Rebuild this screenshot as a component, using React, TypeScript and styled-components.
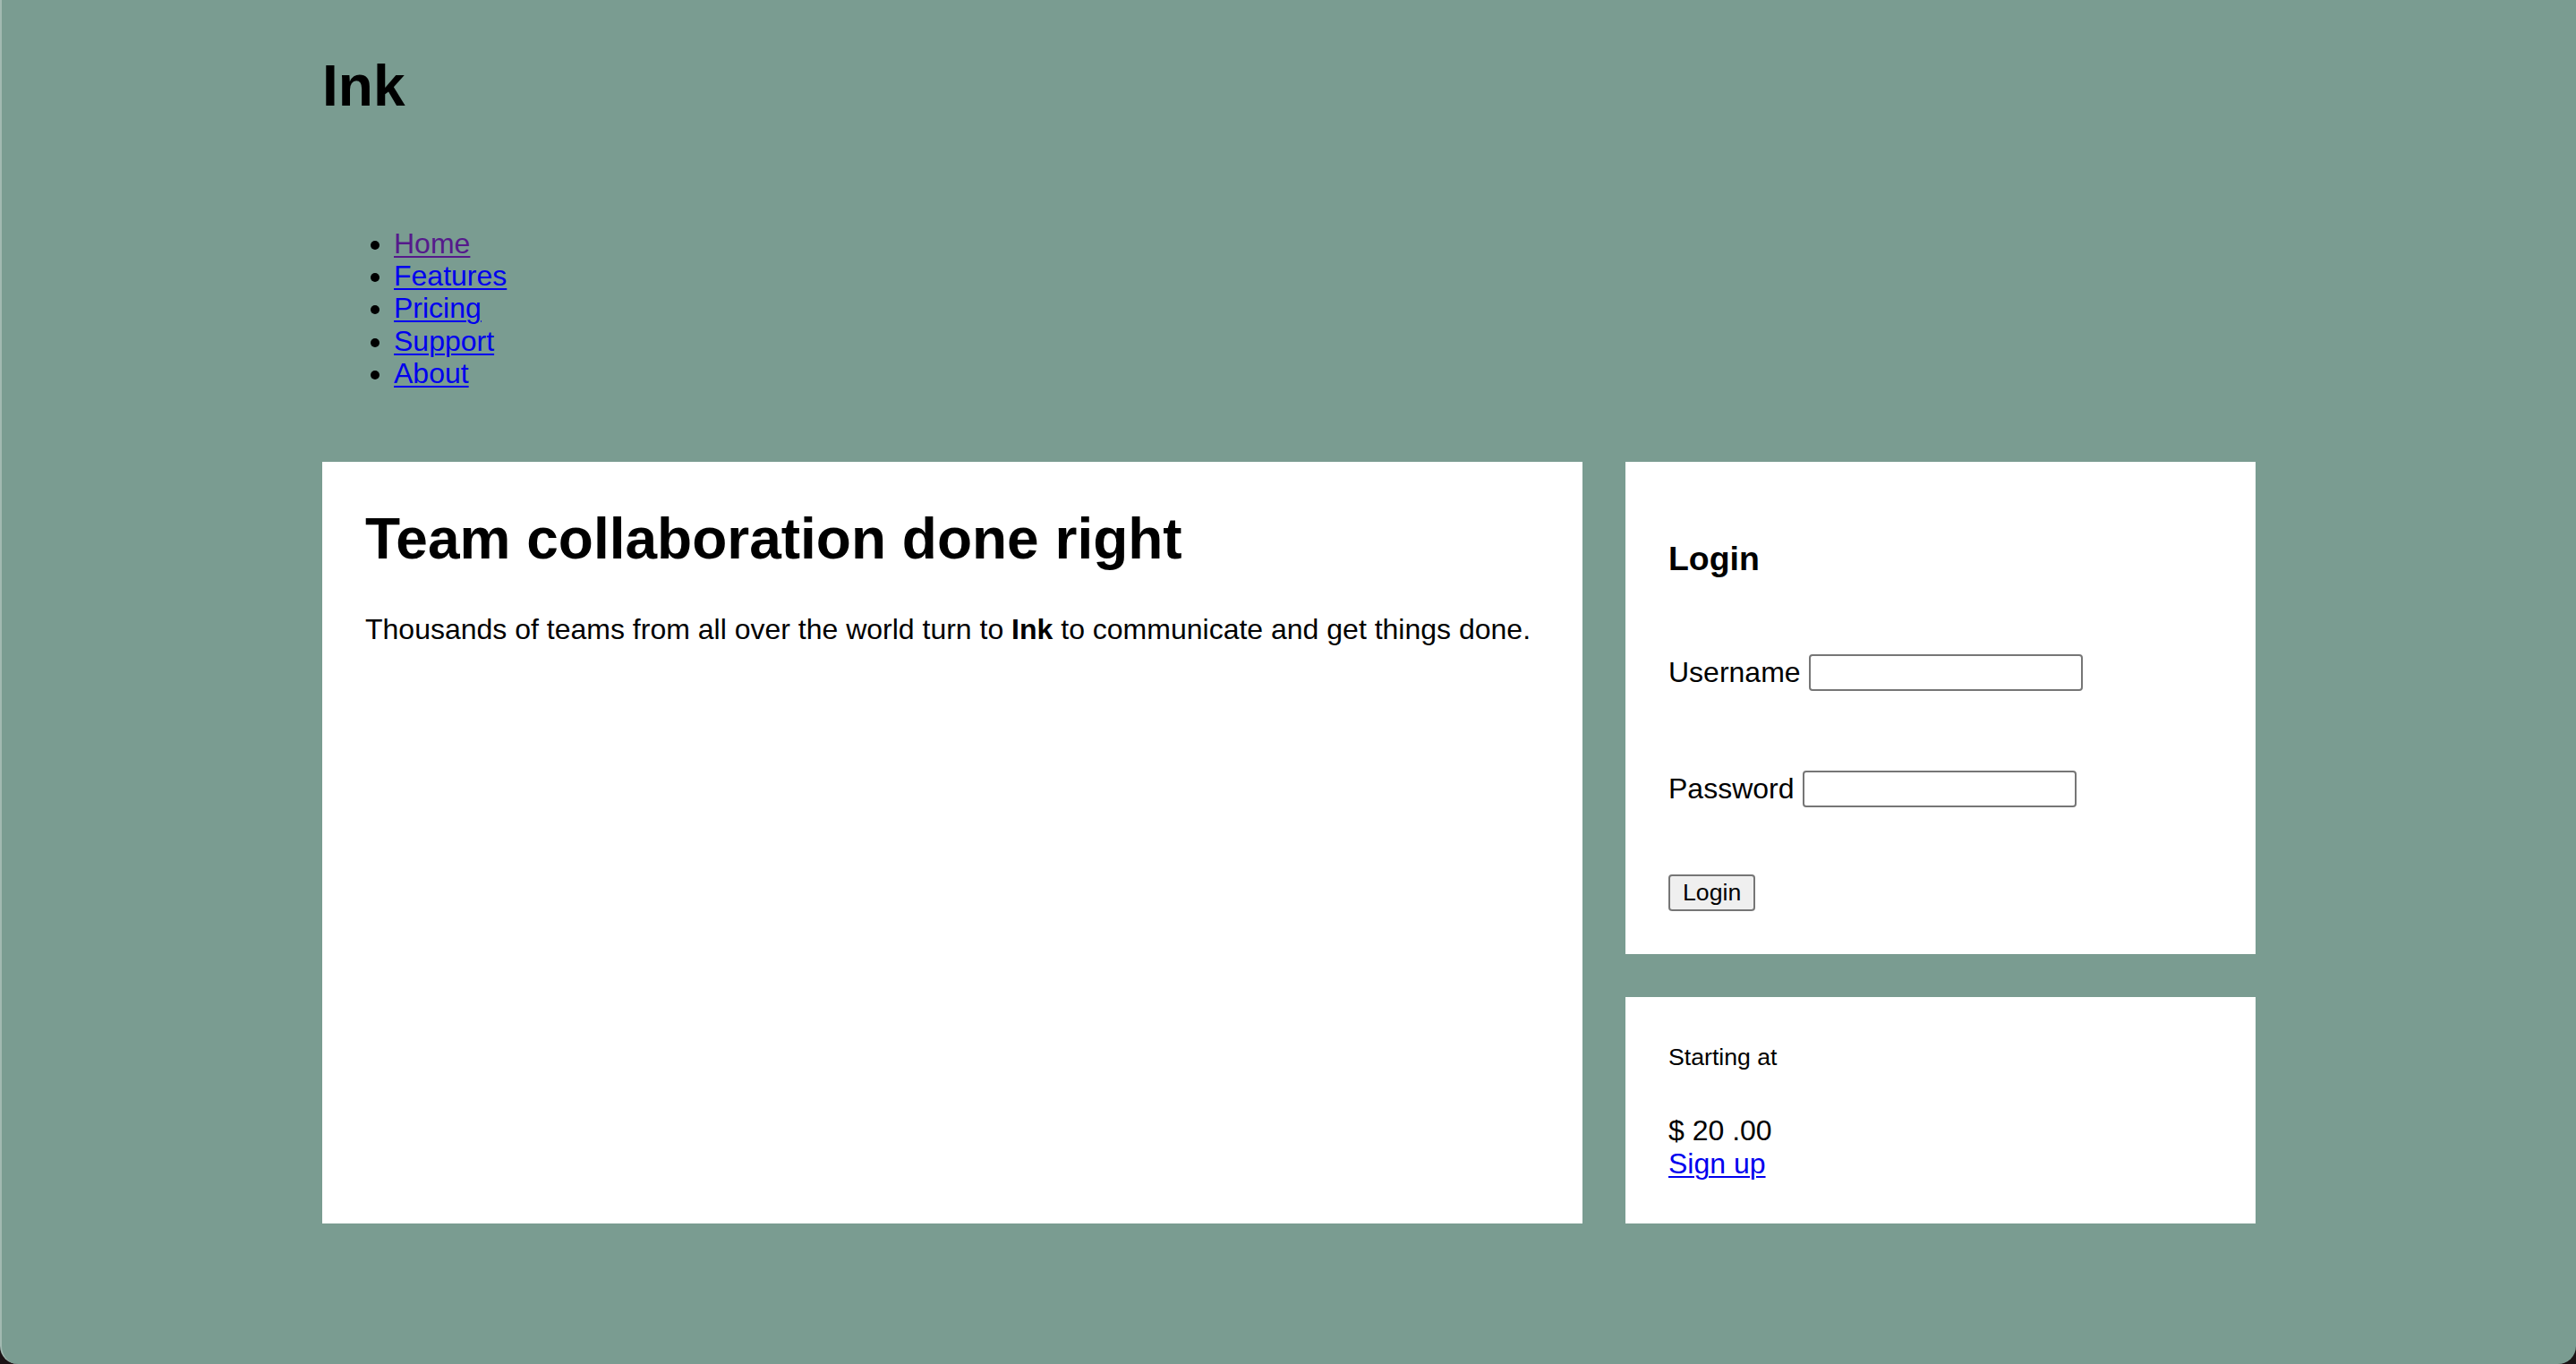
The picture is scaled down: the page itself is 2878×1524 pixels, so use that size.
import React from "react";
import styled, { createGlobalStyle } from "styled-components";

const GlobalStyle = createGlobalStyle`
  html, body {
    margin: 0;
    padding: 0;
    background: #1b1315;
  }
  body {
    font-family: "Liberation Sans", Arial, Helvetica, sans-serif;
    font-size: 32px;
    color: #000;
  }
`;

const Window = styled.div`
  min-height: 1524px;
  box-sizing: border-box;
  background: #7a9c91;
  border-left: 2px solid #a2b9b1;
  border-radius: 0 0 20px 20px;
  overflow: hidden;
`;

const Container = styled.div`
  width: 2160px;
  margin: 0 auto;
  padding-top: 60px;
`;

const Logo = styled.h1`
  margin: 0;
  font-size: 64px;
  font-weight: 700;
  line-height: 73.6px;
`;

const NavList = styled.ul`
  margin: 120px 0 80px;
  padding-left: 80px;
  list-style: disc;
`;

const NavItem = styled.li`
  line-height: 36.4px;
`;

const NavLink = styled.a<{ $visited?: boolean }>`
  color: ${(p) => (p.$visited ? "#551a8b" : "#0000ee")};
  text-decoration: underline;
  text-decoration-thickness: 2px;
  text-underline-offset: 3px;
`;

const Layout = styled.div`
  display: grid;
  grid-template-columns: 1408px 704px;
  gap: 48px;
  align-items: stretch;
`;

const Card = styled.section`
  background: #fff;
  padding: 48px;
  box-sizing: border-box;
`;

const Side = styled.div`
  display: flex;
  flex-direction: column;
  gap: 48px;
`;

const Headline = styled.h1`
  margin: 2px 0 46px;
  font-size: 64px;
  font-weight: 700;
  line-height: 73.6px;
`;

const Lead = styled.p`
  margin: 0;
  line-height: 36.8px;
`;

const LoginTitle = styled.h3`
  margin: 39px 0 0;
  font-size: 37.44px;
  font-weight: 700;
  line-height: 43px;
`;

const Field = styled.label<{ $top: number }>`
  display: flex;
  align-items: center;
  gap: 9px;
  height: 44px;
  margin-top: ${(p) => p.$top}px;
  line-height: 36.8px;
`;

const TextInput = styled.input`
  width: 306px;
  height: 41px;
  box-sizing: border-box;
  border: 2px solid #767676;
  border-radius: 4px;
  background: #fff;
  padding: 2px 4px;
  font-size: 26.67px;
  font-family: inherit;
  margin: 0;
`;

const Button = styled.button`
  margin-top: 73px;
  align-self: flex-start;
  height: 41px;
  box-sizing: border-box;
  padding: 0 14px;
  border: 2px solid #767676;
  border-radius: 4px;
  background: #efefef;
  font-family: inherit;
  font-size: 26.67px;
  color: #000;
`;

const LoginForm = styled.form`
  display: flex;
  flex-direction: column;
`;

const Small = styled.p`
  margin: 4px 0 48px;
  font-size: 26.67px;
  line-height: 31px;
`;

const Price = styled.div`
  line-height: 37px;
`;

const SignUp = styled.a`
  display: block;
  line-height: 37px;
  color: #0000ee;
  text-decoration: underline;
  text-decoration-thickness: 2px;
  text-underline-offset: 3px;
`;

export default function App() {
  return (
    <>
      <GlobalStyle />
      <Window>
        <Container>
          <header>
            <Logo>Ink</Logo>
            <nav>
              <NavList>
                <NavItem>
                  <NavLink href="#" $visited>
                    Home
                  </NavLink>
                </NavItem>
                <NavItem>
                  <NavLink href="#features">Features</NavLink>
                </NavItem>
                <NavItem>
                  <NavLink href="#pricing">Pricing</NavLink>
                </NavItem>
                <NavItem>
                  <NavLink href="#support">Support</NavLink>
                </NavItem>
                <NavItem>
                  <NavLink href="#about">About</NavLink>
                </NavItem>
              </NavList>
            </nav>
          </header>
          <Layout>
            <Card>
              <Headline>Team collaboration done right</Headline>
              <Lead>
                Thousands of teams from all over the world turn to <b>Ink</b> to
                communicate and get things done.
              </Lead>
            </Card>
            <Side>
              <Card>
                <LoginForm onSubmit={(e) => e.preventDefault()}>
                  <LoginTitle>Login</LoginTitle>
                  <Field $top={84}>
                    Username <TextInput type="text" />
                  </Field>
                  <Field $top={86}>
                    Password <TextInput type="password" />
                  </Field>
                  <Button type="submit">Login</Button>
                </LoginForm>
              </Card>
              <Card>
                <Small>Starting at</Small>
                <Price>$ 20 .00</Price>
                <SignUp href="#signup">Sign up</SignUp>
              </Card>
            </Side>
          </Layout>
        </Container>
      </Window>
    </>
  );
}
